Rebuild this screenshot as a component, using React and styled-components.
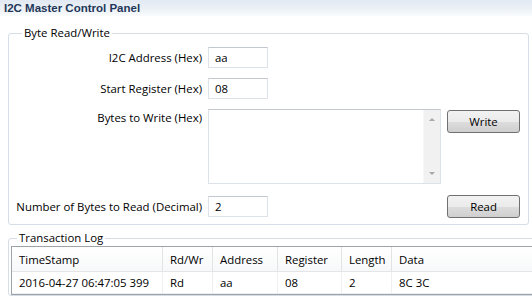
import React from 'react';
import styled, { createGlobalStyle } from 'styled-components';

const GlobalStyle = createGlobalStyle`
  html, body {
    margin: 0;
    padding: 0;
    background: #ffffff;
    overflow: hidden;
  }
  body {
    font-family: "Open Sans", "Noto Sans", sans-serif;
    font-size: 11.4px;
    color: #000;
  }
`;

const Page = styled.div`
  width: 532px;
  height: 296px;
  overflow: hidden;
  display: flex;
  flex-direction: column;
`;

const TitleBar = styled.div`
  height: 18px;
  padding-left: 4px;
  display: flex;
  align-items: center;
  background: linear-gradient(to bottom, #e2e9f2 0%, #edf2f7 60%, #f9fbfc 100%);
  font-family: "Liberation Sans", Arial, sans-serif;
  font-weight: bold;
  font-size: 11.5px;
  color: #1f3759;
`;

const Group = styled.fieldset`
  margin: ${(p) => p.$top}px ${(p) => p.$right}px 0 8px;
  padding: ${(p) => p.$pad};
  border: 1px solid #d5dde6;
  border-radius: 3px;
  min-width: 0;
`;

const Legend = styled.legend`
  margin-left: 6px;
  padding: 0 2px;
  line-height: 16px;
`;

const FormGrid = styled.div`
  display: grid;
  grid-template-columns: 186px 233px 73px;
  grid-template-rows: 21px 21px 76px 23px;
  column-gap: 6px;
  row-gap: 10px;
  align-items: center;
`;

const Label = styled.div`
  text-align: right;
  white-space: nowrap;
  line-height: 16px;
  align-self: ${(p) => (p.$top ? 'start' : 'center')};
  padding-top: ${(p) => (p.$top ? 1 : 0)}px;
`;

const TextBox = styled.div`
  width: 60px;
  height: 21px;
  box-sizing: border-box;
  border: 1px solid #dde2e8;
  border-top-color: #c3c8d0;
  padding-left: 6px;
  display: flex;
  align-items: center;
`;

const Spacer = styled.div``;

const MultiBox = styled.div`
  align-self: start;
  height: 75px;
  box-sizing: border-box;
  border: 1px solid #dde2e8;
  border-top-color: #c3c8d0;
  display: flex;
  justify-content: flex-end;
`;

const ScrollTrack = styled.div`
  width: 16px;
  background: #f1f1f1;
  border-left: 1px solid #f7f7f7;
  display: flex;
  flex-direction: column;
  justify-content: space-between;
  align-items: center;
  padding: 8px 0 8px;
`;

const Arrow = styled.div`
  width: 0;
  height: 0;
  border-left: 3px solid transparent;
  border-right: 3px solid transparent;
  ${(p) => (p.$down ? 'border-top: 3px solid #a8a8a8;' : 'border-bottom: 3px solid #a8a8a8;')}
`;

const Button = styled.button`
  width: 73px;
  height: 23px;
  box-sizing: border-box;
  border: 1px solid #707070;
  border-radius: 3px;
  background: linear-gradient(to bottom, #f2f2f2 0%, #ebebeb 50%, #dddddd 51%, #cfcfcf 100%);
  font-family: inherit;
  font-size: inherit;
  color: #000;
  padding: 0;
  align-self: ${(p) => (p.$top ? 'start' : 'center')};
  margin-top: ${(p) => (p.$top ? 1 : 0)}px;
`;

const Table = styled.div`
  width: 700px;
  border: 1px solid #9ea3a9;
  border-right: none;
`;

const Row = styled.div`
  display: grid;
  grid-template-columns: 151px 50px 65px 64px 50px 1fr;
  height: ${(p) => (p.$head ? 24 : 21)}px;
  background: ${(p) => (p.$head ? 'linear-gradient(to bottom, #ffffff, #f7f8f9)' : '#fff')};
  border-bottom: 1px solid ${(p) => (p.$head ? '#e5e5e5' : '#eeeeee')};
`;

const Cell = styled.div`
  display: flex;
  align-items: center;
  padding-left: 7px;
  border-right: 1px solid ${(p) => (p.$head ? '#e3e3e3' : '#efefef')};
  white-space: nowrap;
`;

const columns = ['TimeStamp', 'Rd/Wr', 'Address', 'Register', 'Length', 'Data'];
const rows = [['2016-04-27 06:47:05 399', 'Rd', 'aa', '08', '2', '8C 3C']];

export default function App() {
  return (
    <Page>
      <GlobalStyle />
      <TitleBar>I2C Master Control Panel</TitleBar>
      <Group $top={9} $right={3} $pad="6px 7px 6px 7px">
        <Legend>Byte Read/Write</Legend>
        <FormGrid>
          <Label>I2C Address (Hex)</Label>
          <TextBox>aa</TextBox>
          <Spacer />
          <Label>Start Register (Hex)</Label>
          <TextBox>08</TextBox>
          <Spacer />
          <Label $top>Bytes to Write (Hex)</Label>
          <MultiBox>
            <ScrollTrack>
              <Arrow />
              <Arrow $down />
            </ScrollTrack>
          </MultiBox>
          <Button $top>Write</Button>
          <Label>Number of Bytes to Read (Decimal)</Label>
          <TextBox>2</TextBox>
          <Button>Read</Button>
        </FormGrid>
      </Group>
      <Group $top={5} $right={-200} $pad="0 0 0 2px">
        <Legend>Transaction Log</Legend>
        <Table>
          <Row $head>
            {columns.map((c) => (
              <Cell key={c} $head>{c}</Cell>
            ))}
          </Row>
          {rows.map((r, ri) => (
            <Row key={ri}>
              {r.map((v, i) => (
                <Cell key={i}>{v}</Cell>
              ))}
            </Row>
          ))}
        </Table>
      </Group>
    </Page>
  );
}
